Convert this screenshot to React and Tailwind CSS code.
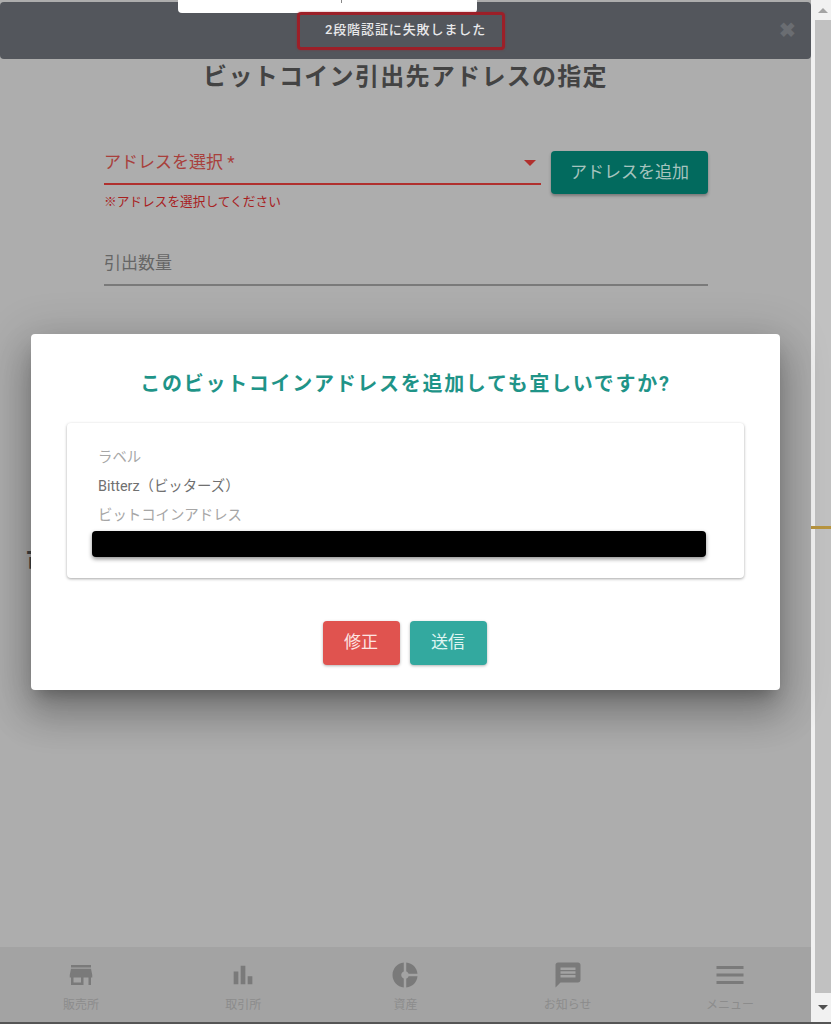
import React from 'react';
import { MdStore, MdBarChart, MdDonutSmall, MdMessage, MdMenu } from 'react-icons/md';

const fontFamily = 'font-["Roboto","Noto_Sans_CJK_JP",sans-serif]';

const navItems = [
  { label: '販売所', icon: <MdStore className="w-[30px] h-[30px]" /> },
  { label: '取引所', icon: <MdBarChart className="w-[28px] h-[28px]" /> },
  { label: '資産', icon: <MdDonutSmall className="w-[30px] h-[30px]" /> },
  { label: 'お知らせ', icon: <MdMessage className="w-[30px] h-[30px]" /> },
  { label: 'メニュー', icon: <MdMenu className="w-[36px] h-[36px]" /> },
];

const Toast = () => (
  <div className="absolute left-0 top-[2px] w-[811px] h-[57px] bg-[#53565c] rounded-[4px] flex items-center justify-center z-30">
    <div className="absolute left-[178px] -top-[2px] w-[299px] h-[13px] bg-white rounded-b-[4px]">
      <div className="ml-[163px] w-px h-[3px] bg-[#888]" />
    </div>
    <div className="absolute left-[297px] top-[10px] w-[208px] h-[38px] border-[3px] border-[#9c1f28] rounded-[4px] shadow-[0_0_2px_rgba(160,30,40,0.6)]" />
    <span className="text-[13px] font-medium tracking-[0.9px] text-[#e8e8ea] -mt-[1px]">2段階認証に失敗しました</span>
    <span className="absolute left-[779px] top-[18px] text-[20px] leading-[20px] font-bold text-[#6a6d72]">✖</span>
  </div>
);

const ConfirmDialog = () => (
  <div className="absolute left-[31px] top-[334px] w-[749px] h-[356px] bg-white rounded-[4px] z-20 shadow-[0_11px_15px_-7px_rgba(0,0,0,0.25),0_24px_38px_3px_rgba(0,0,0,0.2),0_9px_46px_8px_rgba(0,0,0,0.16)] flex flex-col">
    <h2 className="mt-[36px] h-[28px] text-center text-[20px] leading-[28px] font-bold tracking-[1.7px] text-[#1f9488]">
      このビットコインアドレスを追加しても宜しいですか?
    </h2>
    <div className="mt-[25px] mx-[36px] h-[155px] rounded-[4px] bg-white shadow-[0_1px_3px_rgba(0,0,0,0.35)] pl-[25px] pr-[38px] pt-[24px]">
      <p className="pl-[6px] text-[14.4px] leading-[22px] text-[#a6a6a6]">ラベル</p>
      <p className="pl-[6px] mt-[7px] text-[14.4px] leading-[22px] text-[#707070]">Bitterz（ビッターズ）</p>
      <p className="pl-[6px] mt-[7px] text-[14.4px] leading-[22px] text-[#a6a6a6]">ビットコインアドレス</p>
      <div className="mt-[4px] h-[26px] rounded-[4px] bg-black shadow-[0_2px_4px_rgba(0,0,0,0.45)]" />
    </div>
    <div className="mt-[43px] pr-[2px] flex justify-center gap-[10px]">
      <button className="w-[77px] h-[44px] rounded-[4px] bg-[#e0534f] text-[17px] text-[#fde4e2] shadow-[0_1px_3px_rgba(0,0,0,0.3)]">修正</button>
      <button className="w-[77px] h-[44px] rounded-[4px] bg-[#33a99f] text-[17px] text-[#dff5f2] shadow-[0_1px_3px_rgba(0,0,0,0.3)]">送信</button>
    </div>
  </div>
);

// thumb colour sits on the track itself, only the two arrow caps are lighter
const Scrollbar = () => (
  <div className="relative w-[20px] h-[1022px] bg-[#c1c1c1] shrink-0 border-l-[4px] border-[#f1f1f1] flex flex-col justify-between">
    <div className="h-[20px] bg-[#f1f1f1] flex items-center justify-center">
      <div className="w-0 h-0 border-x-[5px] border-x-transparent border-b-[5px] border-b-[#a3a3a3]" />
    </div>
    <div className="h-[29px] bg-[#f1f1f1] flex items-center justify-center">
      <div className="w-0 h-0 border-x-[5px] border-x-transparent border-t-[5px] border-t-[#505050]" />
    </div>
    <div className="absolute -left-[4px] top-[526px] w-[20px] h-[3px] bg-[#b8953f]" />
  </div>
);

const App = () => {
  return (
    <div className={`relative w-[831px] h-[1024px] overflow-hidden bg-[#555] ${fontFamily}`}>
      <div className="flex h-[1022px]">
        <main className="w-[811px] h-full bg-[#adadad] flex flex-col">
          <h1 className="mt-[62px] h-[30px] text-center text-[24px] leading-[30px] font-bold tracking-[1.3px] text-[#434343]">
            ビットコイン引出先アドレスの指定
          </h1>

          <div className="mt-[59px] pl-[104px] pr-[103px] flex gap-[10px] items-start">
            <div className="flex-1">
              <div className="h-[34px] border-b-2 border-[#b0302e] flex items-start justify-between pr-[5px]">
                <span className="text-[17px] leading-[22px] text-[#a8403c]">アドレスを選択 *</span>
                <div className="mt-[9px] w-0 h-0 border-x-[6px] border-x-transparent border-t-[6px] border-t-[#b0302e]" />
              </div>
              <p className="mt-[8px] text-[12.7px] leading-[18px] text-[#a8211f]">※アドレスを選択してください</p>
            </div>
            <button className="w-[157px] h-[43px] rounded-[4px] bg-[#026a5e] text-[17px] text-[#a6c4be] shadow-[0_2px_3px_rgba(0,0,0,0.3)]">
              アドレスを追加
            </button>
          </div>

          <div className="mt-[40px] mr-[103px] ml-[104px] h-[35px] border-b-2 border-[#7a7a7a]">
            <span className="block mt-[1px] text-[17px] leading-[22px] text-[#666]">引出数量</span>
          </div>

          <p className="mt-[261px] ml-[26px] text-[24px] leading-[30px] font-bold text-[#434343]">可能数量</p>

          <nav className="mt-auto h-[75px] bg-[#a3a3a3] grid grid-cols-5">
            {navItems.map((item) => (
              <div key={item.label} className="flex flex-col items-center">
                <div className="h-[40px] mt-[8px] flex items-center justify-center text-[#7a7a7a]">{item.icon}</div>
                <span className="mt-[2px] text-[12px] leading-[16px] text-[#8c8c8c]">{item.label}</span>
              </div>
            ))}
          </nav>
        </main>
        <Scrollbar />
      </div>
      <Toast />
      <ConfirmDialog />
    </div>
  );
};

export default App;
